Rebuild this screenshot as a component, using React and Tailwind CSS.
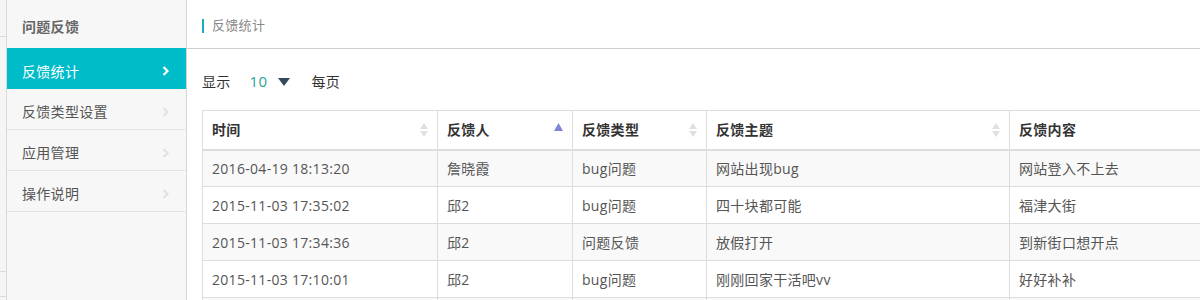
import { useState } from "react";

const rows = [
  ["2016-04-19 18:13:20", "詹晓霞", "bug问题", "网站出现bug", "网站登入不上去"],
  ["2015-11-03 17:35:02", "邱2", "bug问题", "四十块都可能", "福津大街"],
  ["2015-11-03 17:34:36", "邱2", "问题反馈", "放假打开", "到新街口想开点"],
  ["2015-11-03 17:10:01", "邱2", "bug问题", "刚刚回家干活吧vv", "好好补补"],
  ["", "", "", "", ""],
];

const cols = [
  { name: "时间", w: "w-[235px]", sort: "both" },
  { name: "反馈人", w: "w-[135px]", sort: "asc" },
  { name: "反馈类型", w: "w-[134px]", sort: "both" },
  { name: "反馈主题", w: "w-[303px]", sort: "both" },
  { name: "反馈内容", w: "w-[260px]", sort: "none" },
];

const menu = ["反馈统计", "反馈类型设置", "应用管理", "操作说明"];

function Chevron({ active }) {
  return (
    <svg width="8" height="10" viewBox="0 0 8 10" className={active ? "text-white" : "text-[#e2e2e2]"}>
      <path d="M1.5 1 L5.5 5 L1.5 9" fill="none" stroke="currentColor" strokeWidth="2.2" />
    </svg>
  );
}

function SortIcon({ sort }) {
  if (sort === "none") return null;
  if (sort === "asc")
    return (
      <svg width="9" height="8" viewBox="0 0 9 8" className="mt-[-6px]">
        <path d="M4.5 0 L9 8 L0 8 Z" fill="#7f84d9" />
      </svg>
    );
  return (
    <svg width="8" height="14" viewBox="0 0 8 14">
      <path d="M4 0 L8 6 L0 6 Z" fill="#e0e0e0" />
      <path d="M4 14 L8 8 L0 8 Z" fill="#e0e0e0" />
    </svg>
  );
}

export default function App() {
  const [active] = useState(0);
  return (
    <div className="flex h-[300px] w-[1200px] overflow-hidden bg-white text-[14px] tracking-[0.3px] font-['Open_Sans','Noto_Sans_CJK_SC',sans-serif]">
      {/* narrow strip */}
      <div className="flex w-[7px] shrink-0 flex-col border-r border-[#d9d9d9] bg-[#f5f5f5]">
        <div className="h-[37px] shrink-0 border-b border-[#dcdcdc]" />
        <div className="h-[235px] shrink-0 border-b border-[#dcdcdc]" />
        <div className="h-[25px] shrink-0 border-b border-[#dcdcdc]" />
      </div>

      {/* sidebar */}
      <div className="w-[180px] shrink-0 border-r border-[#d6d6d6] bg-[#f7f7f7]">
        <div className="flex h-[48px] items-center px-[15px] pt-[5px] font-bold text-[#666]">问题反馈</div>
        {menu.map((m, i) => (
          <div
            key={m}
            className={
              i === active
                ? "flex h-[41px] items-center justify-between bg-[#00bcc8] pl-[15px] pr-[16px] pt-[5px] text-white"
                : "flex h-[41px] items-center justify-between border-b border-[#e4e4e4] pl-[15px] pr-[16px] pt-[5px] text-[#555]"
            }
          >
            <span>{m}</span>
            <Chevron active={i === active} />
          </div>
        ))}
      </div>

      {/* main */}
      <div className="flex min-w-0 flex-1 flex-col">
        <div className="flex h-[49px] shrink-0 items-center border-b border-[#cfcfcf] pl-[15px] pt-[3px]">
          <span className="mr-[8px] h-[14px] w-[2px] bg-[#1aaebd]" />
          <span className="text-[13px] text-[#888]">反馈统计</span>
        </div>

        <div className="flex h-[61px] shrink-0 items-center pl-[15px] pt-[4px] text-[#333]">
          <span>显示</span>
          <span className="ml-[19px] text-[15px] text-[#2aa58f]">10</span>
          <svg width="12" height="8" viewBox="0 0 12 8" className="ml-[11px]">
            <path d="M0 0 L12 0 L6 8 Z" fill="#34495e" />
          </svg>
          <span className="ml-[21px]">每页</span>
        </div>

        <div className="shrink-0 pl-[15px]">
          <table className="w-[1067px] table-fixed border-collapse text-left">
            <thead>
              <tr className="h-[39px]">
                {cols.map((c) => (
                  <th key={c.name} className={`${c.w} border border-b-2 border-[#dddddd] px-[9px] font-bold text-[#333]`}>
                    <div className="flex items-center justify-between">
                      <span>{c.name}</span>
                      <SortIcon sort={c.sort} />
                    </div>
                  </th>
                ))}
              </tr>
            </thead>
            <tbody>
              {rows.map((r, i) => (
                <tr key={i} className={i % 2 === 0 ? "h-[37px] bg-[#f9f9f9]" : "h-[37px] bg-white"}>
                  {r.map((v, j) => (
                    <td key={j} className="border border-[#dddddd] px-[9px] font-normal text-[#555]">
                      {v}
                    </td>
                  ))}
                </tr>
              ))}
            </tbody>
          </table>
        </div>
      </div>
    </div>
  );
}
